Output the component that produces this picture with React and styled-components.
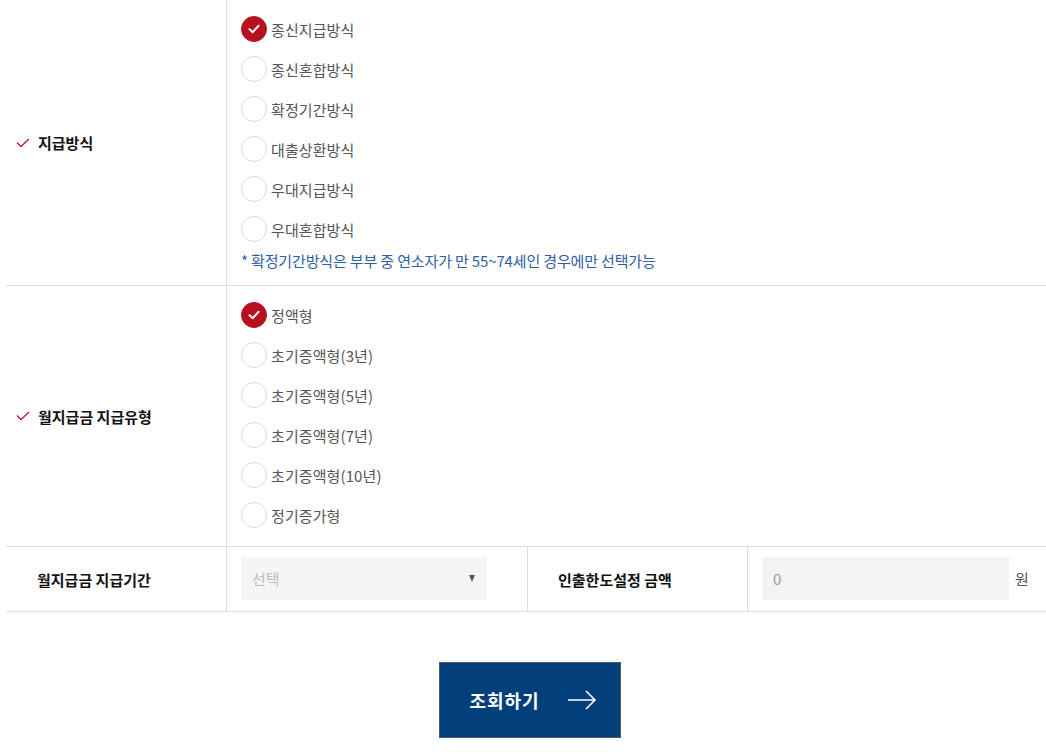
import styled, { createGlobalStyle } from "styled-components";

const GlobalStyle = createGlobalStyle`
  body {
    margin: 0;
    background: #fff;
    font-family: "Noto Sans CJK KR", "Noto Sans", sans-serif;
  }
`;

const Page = styled.div`
  padding-left: 6px;
  width: 1040px;
`;

const Row = styled.div`
  display: grid;
  grid-template-columns: ${(p) => p.$cols || "221px 1fr"};
  border-bottom: 1px solid #dddddd;
`;

const Label = styled.div`
  display: flex;
  align-items: center;
  gap: 8px;
  padding-left: ${(p) => (p.$pad ? p.$pad : "10px")};
  font-size: 15px;
  font-weight: 700;
  color: #111;
  border-right: 1px solid #dddddd;
`;

const Cell = styled.div`
  padding: ${(p) => (p.$first ? "16px 0 14px 14px" : "16px 0 18px 14px")};
  display: flex;
  flex-direction: column;
  gap: 14px;
`;

const FieldCell = styled.div`
  display: flex;
  align-items: center;
  padding: 10px ${(p) => p.$right || "14px"} 11px ${(p) => p.$left || "14px"};
  gap: 6px;
  border-right: ${(p) => (p.$border ? "1px solid #dddddd" : "none")};
`;

const Option = styled.label`
  display: flex;
  align-items: center;
  gap: 4px;
  height: 26px;
  font-size: 15px;
  color: #555;
  letter-spacing: 0.1px;
`;

const Circle = styled.span`
  width: 26px;
  height: 26px;
  box-sizing: border-box;
  border-radius: 50%;
  display: flex;
  align-items: center;
  justify-content: center;
  background: ${(p) => (p.$on ? "#b5111f" : "#fff")};
  border: 1px solid ${(p) => (p.$on ? "#b5111f" : "#dcdcdc")};
`;

const Note = styled.p`
  margin: -5px 0 0;
  font-size: 15px;
  line-height: 20px;
  color: #2e5ea8;
  letter-spacing: -0.15px;
`;

const SelectBox = styled.div`
  flex: 1;
  height: 43px;
  background: #f5f5f5;
  display: flex;
  align-items: center;
  justify-content: space-between;
  padding: 0 12px 0 11px;
  font-size: 15px;
  color: #bbbbbb;
`;

const Caret = styled.span`
  width: 0;
  height: 0;
  border-left: 3.5px solid transparent;
  border-right: 3.5px solid transparent;
  border-top: 7px solid #555;
`;

const InputBox = styled.div`
  width: 246px;
  height: 43px;
  background: #f3f3f3;
  display: flex;
  align-items: center;
  padding-left: 10px;
  box-sizing: border-box;
  font-size: 15px;
  color: #999;
`;

const Unit = styled.span`
  font-size: 15px;
  color: #555;
`;

const Actions = styled.div`
  display: flex;
  justify-content: center;
  padding: 50px 0 20px 7px;
`;

const Button = styled.button`
  width: 182px;
  height: 76px;
  background: #023f7b;
  border: 1px solid #555a62;
  color: #fff;
  font-family: inherit;
  font-size: 18px;
  font-weight: 700;
  letter-spacing: 1px;
  display: flex;
  align-items: center;
  justify-content: center;
  gap: 27px;
  padding: 0 0 0 7px;
  cursor: pointer;
`;

const Check = () => (
  <svg width="14" height="14" viewBox="0 0 14 14" fill="none">
    <path d="M2.5 7.2 L5.8 10.2 L11.5 3.8" stroke="#fff" strokeWidth="2" strokeLinecap="round" strokeLinejoin="round" />
  </svg>
);

const SmallCheck = () => (
  <svg width="14" height="10" viewBox="0 0 14 10" fill="none">
    <path d="M1 4.5 L5 8.5 L13 1" stroke="#c8102e" strokeWidth="1.3" />
  </svg>
);

const Arrow = () => (
  <svg width="30" height="20" viewBox="0 0 30 20" fill="none">
    <path d="M1 10 H28 M19 1 L28 10 L19 19" stroke="#fff" strokeWidth="1.6" />
  </svg>
);

const Radio = ({ on, children }) => (
  <Option>
    <Circle $on={on}>{on && <Check />}</Circle>
    {children}
  </Option>
);

const methods = ["종신지급방식", "종신혼합방식", "확정기간방식", "대출상환방식", "우대지급방식", "우대혼합방식"];
const types = ["정액형", "초기증액형(3년)", "초기증액형(5년)", "초기증액형(7년)", "초기증액형(10년)", "정기증가형"];

export default function App() {
  return (
    <>
      <GlobalStyle />
      <Page>
        <Row>
          <Label>
            <SmallCheck />
            지급방식
          </Label>
          <Cell $first>
            {methods.map((m, i) => (
              <Radio key={m} on={i === 0}>
                {m}
              </Radio>
            ))}
            <Note>* 확정기간방식은 부부 중 연소자가 만 55~74세인 경우에만 선택가능</Note>
          </Cell>
        </Row>
        <Row>
          <Label>
            <SmallCheck />
            월지급금 지급유형
          </Label>
          <Cell>
            {types.map((t, i) => (
              <Radio key={t} on={i === 0}>
                {t}
              </Radio>
            ))}
          </Cell>
        </Row>
        <Row $cols="221px 301px 220px 1fr">
          <Label $pad="31px">월지급금 지급기간</Label>
          <FieldCell $border $right="40px">
            <SelectBox>
              선택
              <Caret />
            </SelectBox>
          </FieldCell>
          <Label $pad="30px">인출한도설정 금액</Label>
          <FieldCell $left="15px">
            <InputBox>0</InputBox>
            <Unit>원</Unit>
          </FieldCell>
        </Row>
        <Actions>
          <Button>
            조회하기
            <Arrow />
          </Button>
        </Actions>
      </Page>
    </>
  );
}
